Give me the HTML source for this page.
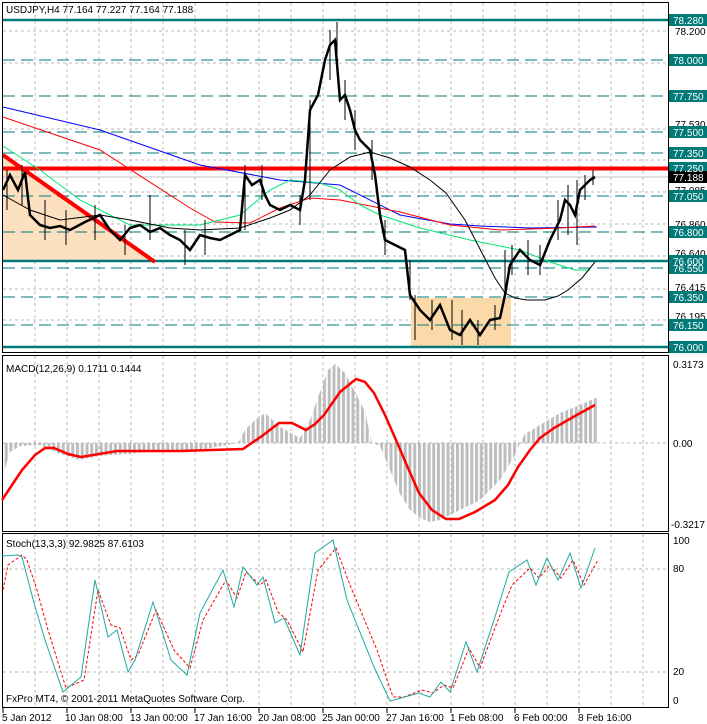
<!DOCTYPE html>
<html><head><meta charset="utf-8"><style>
html,body{margin:0;padding:0;background:#fff}
svg{display:block}
text{font-family:"Liberation Sans",sans-serif;font-size:10px}
</style></head><body>
<svg width="707" height="724" viewBox="0 0 707 724" xmlns="http://www.w3.org/2000/svg">
<defs>
<pattern id="bars" width="4.75" height="10" patternUnits="userSpaceOnUse">
<rect x="0" y="0" width="3" height="10" fill="#bdbdbd"/>
</pattern>
</defs>
<rect width="707" height="724" fill="#fff"/>
<g stroke="#b8b8b8" stroke-dasharray="3,3" stroke-width="1">
<path d="M35 3V352M67 3V352M99 3V352M131 3V352M163 3V352M195 3V352M227 3V352M259 3V352M291 3V352M323 3V352M355 3V352M387 3V352M419 3V352M451 3V352M483 3V352M515 3V352M547 3V352M579 3V352M611 3V352M643 3V352"/>
<path d="M35 356V532M67 356V532M99 356V532M131 356V532M163 356V532M195 356V532M227 356V532M259 356V532M291 356V532M323 356V532M355 356V532M387 356V532M419 356V532M451 356V532M483 356V532M515 356V532M547 356V532M579 356V532M611 356V532M643 356V532"/>
<path d="M35 534V707M67 534V707M99 534V707M131 534V707M163 534V707M195 534V707M227 534V707M259 534V707M291 534V707M323 534V707M355 534V707M387 534V707M419 534V707M451 534V707M483 534V707M515 534V707M547 534V707M579 534V707M611 534V707M643 534V707"/>
<path d="M3 31H668M3 63H668M3 129H668M3 160H668M3 192H668M3 224H668M3 256H668M3 289H668M3 320H668M3 443H668M3 569H668M3 672H668"/>
</g>
<polygon points="3,153 155,262 3,262" fill="#fde0c0"/>
<rect x="411" y="298" width="100" height="49" fill="#fcd9a8"/>
<g stroke="#007a78" stroke-width="1" stroke-dasharray="12,6">
<path d="M3 60H668M3 96H668M3 132H668M3 153H668M3 196H668M3 232H668M3 268H668M3 297H668M3 325H668"/>
</g>
<g stroke="#007a78" stroke-width="2.5">
<path d="M3 20H668M3 261H668M3 347H668"/>
</g>
<path d="M3 168.5H668" stroke="#ff0000" stroke-width="4"/>
<path d="M3 177H668" stroke="#c0c0c0" stroke-width="1"/>
<path d="M3 155L155 262" stroke="#ff0000" stroke-width="4"/>
<polyline fill="none" stroke="#0000ff" stroke-width="1" points="3,107 100,130 200,165 280,180 340,185 400,215 450,224 480,226 530,228 597,227"/>
<polyline fill="none" stroke="#ff0000" stroke-width="1" points="3,117 100,150 190,208 215,222 250,223 280,208 310,198 340,200 400,212 450,225 500,230 560,228 595,226"/>
<polyline fill="none" stroke="#00e676" stroke-width="1" points="3,146 40,170 80,200 100,210 130,225 170,225 200,225 240,215 270,190 290,180 320,183 340,190 360,205 380,215 420,228 470,240 520,250 550,262 575,270 590,270"/>
<polyline fill="none" stroke="#000" stroke-width="1" points="3,195 30,210 60,220 100,215 130,220 170,228 200,230 240,228 270,218 290,210 310,195 330,170 350,157 370,152 390,158 410,167 430,180 446,193 465,220 482,253 495,278 505,293 515,298 527,300 545,300 558,296 568,290 582,278 595,262"/>
<polyline fill="none" stroke="#000" stroke-width="2.5" points="3,190 10,175 18,190 25,172 30,215 40,225 50,228 60,226 70,230 85,222 100,215 110,230 120,240 130,228 140,225 150,232 160,228 170,235 180,240 190,250 200,235 210,238 220,240 230,235 240,230 245,175 252,185 260,180 265,195 270,205 280,210 290,205 300,210 305,180 310,110 318,95 325,60 330,45 335,40 340,100 345,95 350,110 355,130 360,140 370,150 375,175 380,215 385,240 395,245 405,250 410,295 420,310 430,320 440,305 450,330 460,335 470,320 480,335 490,320 500,318 505,295 510,265 520,250 530,260 540,265 550,240 560,220 565,200 570,205 575,215 580,190 590,180 595,177"/>
<g stroke="#000" stroke-width="1">
<path d="M7 170V210M22 165V205M45 200V240M66 210V245M95 205V240M125 225V255M150 195V240M185 230V265M205 220V255M245 165V230M262 165V200M300 195V225M310 100V200M330 30V80M337 22V60M345 80V120M355 110V150M372 140V180M385 220V255M410 260V300M415 295V340M432 300V330M452 300V340M462 310V345M478 320V345M495 305V330M505 250V300M512 245V275M528 240V275M540 245V275M558 200V240M568 185V235M577 180V245M585 175V200M593 170V185"/>
</g>
<g fill="none" stroke="#000" stroke-width="1">
<rect x="2.5" y="2.5" width="666" height="350"/>
<rect x="2.5" y="355.5" width="666" height="176"/>
<rect x="2.5" y="533.5" width="666" height="174"/>
</g>
<g fill="#000"><text x="675" y="35">78.200</text><text x="675" y="194">77.085</text><text x="675" y="228">76.860</text><text x="675" y="291">76.415</text><text x="675" y="257">76.640</text><text x="675" y="128">77.530</text><text x="675" y="320">76.195</text></g>
<g fill="#007a78">
<rect x="669" y="14" width="38" height="12"/><rect x="669" y="54" width="38" height="12"/><rect x="669" y="90" width="38" height="12"/><rect x="669" y="126" width="38" height="12"/><rect x="669" y="147" width="38" height="12"/><rect x="669" y="162" width="38" height="12"/><rect x="669" y="190" width="38" height="12"/><rect x="669" y="226" width="38" height="12"/><rect x="669" y="255" width="38" height="12"/><rect x="669" y="262" width="38" height="12"/><rect x="669" y="291" width="38" height="12"/><rect x="669" y="319" width="38" height="12"/><rect x="669" y="341" width="38" height="12"/>
</g>
<rect x="669" y="171" width="38" height="12" fill="#000"/>
<g fill="#fff">
<text x="673" y="24">78.280</text><text x="673" y="64">78.000</text><text x="673" y="100">77.750</text><text x="673" y="136">77.500</text><text x="673" y="157">77.350</text><text x="673" y="172">77.250</text><text x="673" y="181">77.188</text><text x="673" y="200">77.050</text><text x="673" y="236">76.800</text><text x="673" y="265">76.600</text><text x="673" y="272">76.550</text><text x="673" y="301">76.350</text><text x="673" y="329">76.150</text><text x="673" y="351">76.000</text>
</g>
<text x="6" y="13" fill="#000">USDJPY,H4  77.164 77.227 77.164 77.188</text>
<polygon fill="url(#bars)" points="3,443 3,475 10,452 20,446 40,445 60,454 80,460 100,456 150,452 200,450 238,443 245,430 255,420 265,413 280,427 300,438 310,420 320,392 328,370 335,364 345,373 355,392 365,412 372,443 380,446 390,470 400,494 410,510 420,518 430,522 440,520 460,510 480,500 500,480 515,455 520,443 525,434 540,425 560,413 580,405 598,397 598,443"/>
<path d="M3 443H668" stroke="#b8b8b8" stroke-dasharray="3,3"/>
<polyline fill="none" stroke="#ff0000" stroke-width="2.5" points="2,500 22,470 35,455 45,448 54,448 68,454 81,457 117,451 180,451 243,449 262,436 279,423 292,423 306,430 315,424 324,415 340,392 356,379 365,382 374,393 385,415 396,440 408,468 419,493 432,510 446,519 459,519 475,512 495,500 508,485 518,467 530,450 540,438 554,428 575,416 595,405"/>
<text x="6" y="372" fill="#000">MACD(12,26,9) 0.1711 0.1444</text>
<text x="673" y="368" fill="#000">0.3173</text><text x="673" y="447" fill="#000">0.00</text><text x="671" y="528" fill="#000">-0.3217</text>
<polyline fill="none" stroke="#ff0000" stroke-width="1" stroke-dasharray="3,2" points="3,590 8,565 22,555 27,560 37,590 48,630 66,688 84,680 98,590 111,625 120,628 131,660 138,655 156,610 174,650 190,668 203,620 226,580 237,598 246,572 260,585 266,580 278,612 287,620 303,652 318,570 336,548 350,585 377,650 393,697 404,697 422,690 433,693 444,685 453,688 469,648 480,668 498,620 512,585 530,568 539,578 550,565 561,578 573,560 584,585 598,560"/>
<polyline fill="none" stroke="#20a8a0" stroke-width="1" points="2,556 18,555 22,557 34,603 45,640 63,692 81,677 95,580 108,637 117,630 128,672 135,660 153,602 171,660 187,675 200,613 223,570 234,607 243,567 257,585 263,577 275,623 284,618 300,655 315,553 333,540 347,600 374,667 390,701 401,698 419,693 430,697 441,682 450,692 466,642 477,672 495,617 509,572 527,560 536,585 547,558 558,580 570,553 581,588 595,548"/>
<text x="6" y="547" fill="#000">Stoch(13,3,3) 92.9825 87.6103</text>
<text x="673" y="544" fill="#000">100</text><text x="673" y="572" fill="#000">80</text><text x="673" y="675" fill="#000">20</text><text x="673" y="704" fill="#000">0</text>
<text x="6" y="702" fill="#000">FxPro MT4, © 2001-2011 MetaQuotes Software Corp.</text>
<g stroke="#000"><path d="M3 708V713M67 708V713M131 708V713M195 708V713M259 708V713M323 708V713M387 708V713M451 708V713M515 708V713M579 708V713"/></g>
<g fill="#000"><text x="2" y="721">5 Jan 2012</text><text x="65" y="721">10 Jan 08:00</text><text x="130" y="721">13 Jan 00:00</text><text x="194" y="721">17 Jan 16:00</text><text x="258" y="721">20 Jan 08:00</text><text x="322" y="721">25 Jan 00:00</text><text x="386" y="721">27 Jan 16:00</text><text x="450" y="721">1 Feb 08:00</text><text x="514" y="721">6 Feb 00:00</text><text x="578" y="721">8 Feb 16:00</text></g>
</svg>
</body></html>
